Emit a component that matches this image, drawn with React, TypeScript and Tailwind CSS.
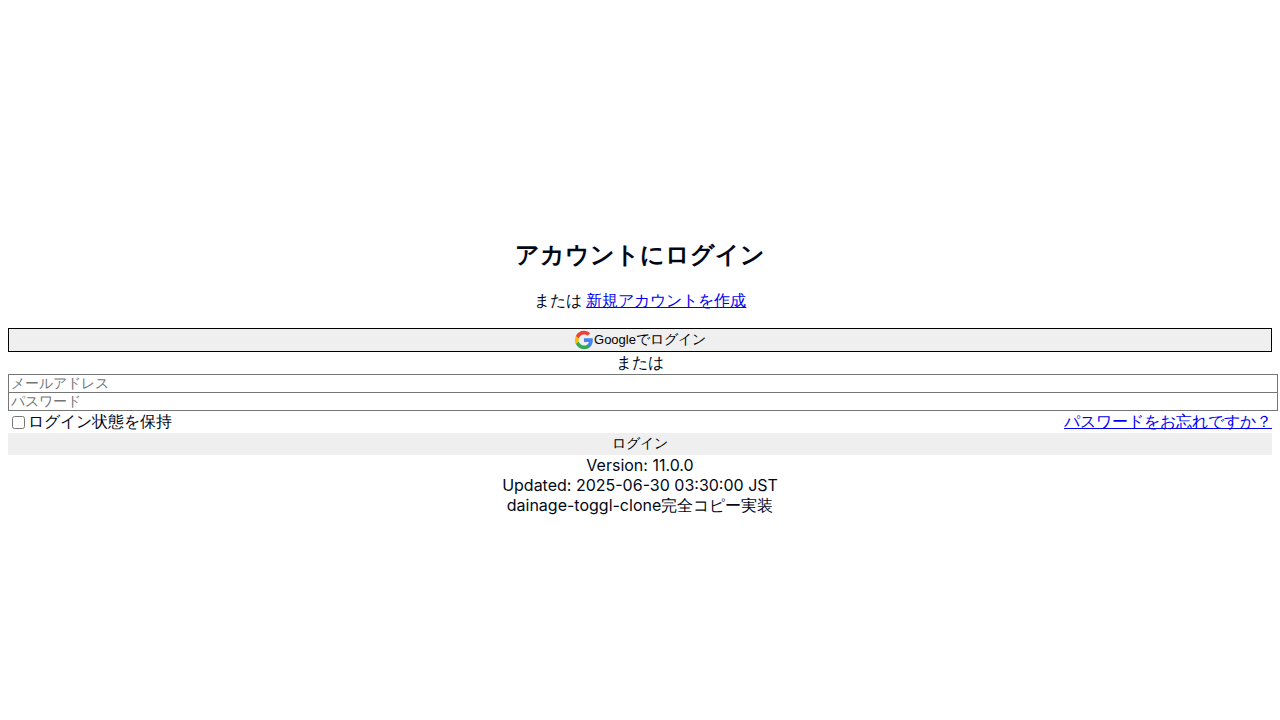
import { useState } from "react";

function GoogleIcon() {
  return (
    <svg className="size-5 shrink-0" viewBox="0 0 24 24" aria-hidden="true">
      <path fill="#4285F4" d="M22.56 12.25c0-.78-.07-1.53-.2-2.25H12v4.26h5.92c-.26 1.37-1.04 2.53-2.21 3.31v2.77h3.57c2.08-1.92 3.28-4.74 3.28-8.09z" />
      <path fill="#34A853" d="M12 23c2.97 0 5.46-.98 7.28-2.66l-3.57-2.77c-.98.66-2.23 1.06-3.71 1.06-2.86 0-5.29-1.93-6.16-4.53H2.18v2.84C3.99 20.53 7.7 23 12 23z" />
      <path fill="#FBBC05" d="M5.84 14.09c-.22-.66-.35-1.36-.35-2.09s.13-1.43.35-2.09V7.07H2.18C1.43 8.55 1 10.22 1 12s.43 3.45 1.18 4.93l2.85-2.22.81-.62z" />
      <path fill="#EA4335" d="M12 5.38c1.62 0 3.06.56 4.21 1.64l3.15-3.15C17.45 2.09 14.97 1 12 1 7.7 1 3.99 3.47 2.18 7.07l3.66 2.84c.87-2.6 3.3-4.53 6.16-4.53z" />
    </svg>
  );
}

const inputClass =
  "block w-[calc(100%+6px)] border border-[#767676] bg-white px-[2px] py-px font-['Liberation_Sans',sans-serif] text-sm leading-[15px] placeholder:text-[#757575] placeholder:opacity-100";

export default function App() {
  const [remember, setRemember] = useState(false);

  return (
    <main className="flex min-h-screen flex-col justify-center overflow-x-hidden bg-white px-2 pt-[35px] font-['Inter',sans-serif] text-base leading-5 text-[#020817]">
      <div className="text-center">
        <h2 className="text-2xl leading-[30px] font-bold">アカウントにログイン</h2>
        <p className="mt-5 pb-0.5">
          または{" "}
          <a href="#signup" className="text-[#0000ee] underline">
            新規アカウントを作成
          </a>
        </p>
      </div>
      <button
        type="button"
        className="mt-4 flex w-full items-center justify-center border border-black bg-[#efefef] px-1.5 py-px font-['Liberation_Sans',sans-serif] text-sm leading-[18px] text-black"
      >
        <GoogleIcon />
        <span className="pb-0.5">
          <span className="text-[13px] leading-none">Google</span>でログイン
        </span>
      </button>
      <div className="pb-0.5 text-center">または</div>
      <form onSubmit={(e) => e.preventDefault()}>
        <input type="email" aria-label="メールアドレス" placeholder="メールアドレス" className={inputClass} />
        <div className="-mt-px">
          <input type="password" aria-label="パスワード" placeholder="パスワード" className={inputClass} />
        </div>
        <div className="flex items-center justify-between">
          <div className="flex items-center">
            <input
              id="remember"
              type="checkbox"
              checked={remember}
              onChange={(e) => setRemember(e.target.checked)}
              className="mr-[3px] ml-1 size-[13px]"
            />
            <label htmlFor="remember" className="pb-0.5">
              ログイン状態を保持
            </label>
          </div>
          <a href="#reset" className="pb-0.5 text-[#0000ee] underline">
            パスワードをお忘れですか？
          </a>
        </div>
        <button
          type="submit"
          className="block w-full bg-[#efefef] pb-0.5 font-['Liberation_Sans',sans-serif] text-sm leading-5 text-black"
        >
          ログイン
        </button>
      </form>
      <footer className="text-center">
        <div>Version: 11.0.0</div>
        <div>Updated: 2025-06-30 03:30:00 JST</div>
        <div>dainage-toggl-clone完全コピー実装</div>
      </footer>
    </main>
  );
}
